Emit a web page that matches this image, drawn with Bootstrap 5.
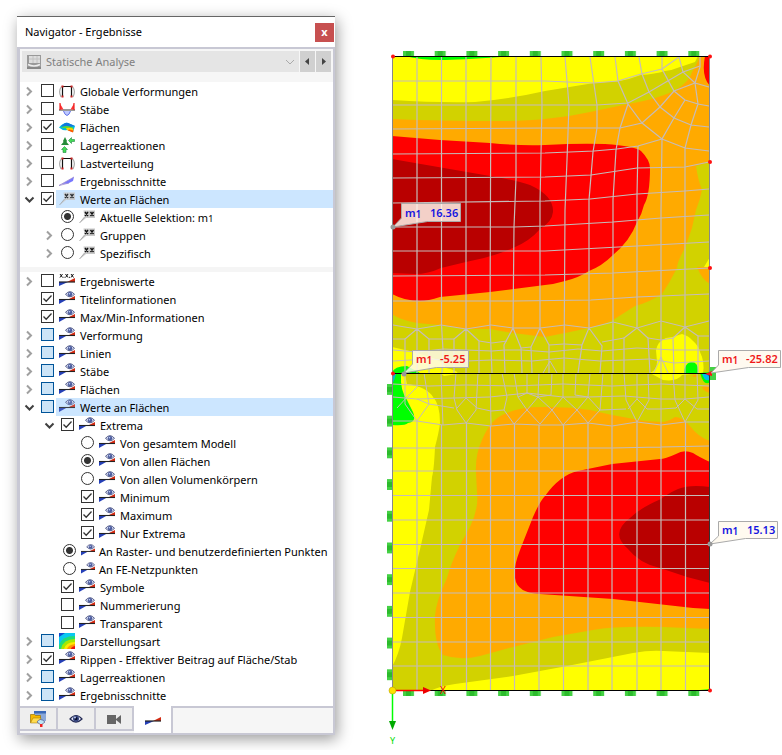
<!DOCTYPE html>
<html lang="de">
<head>
<meta charset="utf-8">
<meta name="viewport" content="width=device-width, initial-scale=1">
<title>Navigator - Ergebnisse</title>
<link href="https://cdn.jsdelivr.net/npm/bootstrap@5.3.0/dist/css/bootstrap.min.css" rel="stylesheet">
<style>
body{font-family:"Noto Sans","Open Sans",sans-serif;font-size:11px;line-height:18px;color:#000;background:#fff}
.workspace{padding:16px 0 0 17px}
.navigator{flex:0 0 318px;border-top:1px solid #666;background:#fff;box-shadow:2px 4px 14px rgba(0,0,0,.4)}
.titlebar{height:30px;padding:0 1px 0 8px;font-size:11px}
.close-btn{width:19px;height:19px;background:#c75050;color:#fff;border:0;border-radius:0;padding:0;font-size:11px;line-height:16px;font-weight:700}
.pane{border:2px solid #c8c8d4;border-left-width:3px}
.picker{background:#f6f6f6;height:33px;padding:2px 2px 0}
.picker .case-box{height:21px;background:#e5e5e5;margin-right:1px}
.case-box svg{width:14px;height:14px;margin:0 0 0 5px;flex:none}
.case-box select{height:21px;padding:0 18px 0 5px;border:0;border-radius:0;background-color:transparent;color:#808080;font-size:11px;line-height:20px;background-size:12px 12px;background-position:right 3px center;background-image:url("data:image/svg+xml,%3Csvg xmlns='http://www.w3.org/2000/svg' viewBox='0 0 12 12'%3E%3Cpath d='M2 4l4 4 4-4' fill='none' stroke='%23aaa'/%3E%3C/svg%3E")}
.step-btn{width:15px;height:21px;border:0;padding:0;background:#d0d0d0;margin-left:1px;line-height:0}
.step-btn:first-of-type{margin-left:0}
.tree li{height:18px}
.tree .lv2{padding-left:20px}
.tree .lv3{padding-left:40px}
.tree .nudged{padding-left:22px}
.tree .nudged label{padding-left:3px}
.tree .nudged .glyph{width:14px;margin-right:4px}
.twist{width:21px;height:18px;border:0;background:none;padding:0 3px 0 0;line-height:0;flex:none}
.twist svg{width:11px;height:11px}
.tick{appearance:none;width:13px;height:13px;margin:2px 0 0;border:1px solid #333;background:#fff center/11px 11px no-repeat;flex:none}
.tick:checked{background-image:url("data:image/svg+xml,%3Csvg xmlns='http://www.w3.org/2000/svg' viewBox='0 0 11 11'%3E%3Cpath d='M1.5 5.5l2.7 2.8L9.5 2.5' fill='none' stroke='%23333' stroke-width='1.3'/%3E%3C/svg%3E")}
.tick.mixed{background-color:#cce4f7;border-color:#005499}
.tick[type=radio]{border-radius:50%}
.tick[type=radio]:checked{background-image:radial-gradient(circle,#333 0 3px,transparent 4px)}
.tree label{height:18px;margin-left:2px;padding-left:3px;padding-top:1px;white-space:nowrap}
.tree .chosen label{background:#cce6ff}
.glyph{width:16px;height:16px;margin:0 5px 0 0;flex:none}
.chosen .glyph{opacity:.85}
.sub1{font-size:9px}
.split{height:5px;background:#f5f5f5;margin-top:5px}
.dock{height:27px;margin-top:2px;background:#f6f6f6;border-top:2px solid #c8c8d4}
.dock .dock-tab{width:38px;height:23px;border:0;border-right:2px solid #c8c8d4;border-bottom:2px solid #c8c8d4;background:#eee;padding:0;line-height:0}
.dock .dock-tab.current{width:39px;height:27px;background:#fff;margin-top:-2px;border-bottom:0}
.dock svg{width:16px;height:16px}
.model{margin:24px 0 0 45px;min-width:0}
.model svg{display:block;width:100%}
.callouts text{font-size:11px;font-weight:600}
.callouts .idx{font-size:10px}
</style>
<script src="https://cdn.jsdelivr.net/npm/bootstrap@5.3.0/dist/js/bootstrap.bundle.min.js"></script>
</head>
<body>
<svg width="0" height="0" class="position-absolute" aria-hidden="true">
<defs>
<symbol id="i-closed" viewBox="0 0 11 11"><path d="M3 1.500l4 4-4 4" fill="none" stroke="#a0a0a0" stroke-width="2"/></symbol>
<symbol id="i-open" viewBox="0 0 11 11"><path d="M1.500 3.500l4 4 4-4" fill="none" stroke="#404040" stroke-width="2"/></symbol>
<symbol id="i-frame" viewBox="0 0 16 16"><path d="M2.500 3.500Q-1 8 2 14M13.500 3.500q3.500 4.500.5 10.500" fill="none" stroke="#aaa" stroke-width="1.200"/><path d="M3.500 13.500v-10h9v10" fill="none" stroke="#111" stroke-width="1.200"/><path d="M2.500 2.500h2v2h-2zM11.500 2.500h2v2h-2zM2.500 12.500h2v2h-2zM11.500 12.500h2v2h-2z" fill="#c22"/></symbol>
<symbol id="i-beam" viewBox="0 0 16 16"><path d="M4 9Q8 20 12 9z" fill="#bcc8ff" stroke="#6574e8"/><path d="M0 8h16v2H0z" fill="#999"/><path d="M1 2.500L4.500 8.500H1zM15 2.500l-3.500 6H15z" fill="#f33"/><path d="M1 2v7M15 2v7" stroke="#e22" stroke-width="1.200"/></symbol>
<symbol id="i-surf" viewBox="0 0 16 16"><path d="M0 8.500Q5 3 9 4l7 3-2 6-6-2q-4 1-8-2.500z" fill="#0bd"/><path d="M2 7.500Q6 3 9 4l7 3-5 1z" fill="#17d"/><path d="M2 8.500q5-3 12 0v2l-6-1z" fill="#5d3"/><path d="M7 9q4-1 7.500 1l-.5 3-6-2z" fill="#fc0"/><path d="M10 10.500l4.500 1-.5 2-5-2z" fill="#f50"/></symbol>
<symbol id="i-reaction" viewBox="0 0 16 16"><path d="M6 0l2 4-.500 1L10 8H2l2.500-3L4 4z" fill="#258a38"/><path d="M5.500 9.500l3 3H7v3H4v-3H2.500z" fill="#4d5" stroke="#284" stroke-width=".6"/><path d="M9.500 3.500l3-3V2.500H15.500v2h-3v2z" fill="#4d5" stroke="#284" stroke-width=".6"/></symbol>
<symbol id="i-section" viewBox="0 0 16 16"><path d="M3 11L15 4l-1 4-5 2.500z" fill="#77f"/><path d="M0 12.500L15 4M0 12.500l10-2.500" stroke="#98c" stroke-width=".8"/></symbol>
<symbol id="i-xx" viewBox="0 0 16 16"><path d="M4.500 1.500H16V9H7l-6 5 4.500-6z" fill="#c8c8c8"/><path d="M.500 14l5-6" stroke="#999" stroke-width=".8"/><path d="M6 3l3 4m0-4L6 7m5.500-4l3 4m0-4l-3 4" stroke="#111" stroke-width="1.300"/></symbol>
<symbol id="i-ramp" viewBox="0 0 16 16"><path d="M0 9h9l-9 4z" fill="#2540b8"/><path d="M8 9l8-4v4z" fill="#d22a12"/><path d="M0 9h16" stroke="#222" stroke-width="1.200"/></symbol>
<symbol id="i-eye" viewBox="0 0 16 16"><path d="M0 8.500h8l-8 4.500z" fill="#2540b8"/><path d="M9 8.500l7-3.500v4z" fill="#d22a12"/><path d="M0 8.500h16" stroke="#222" stroke-width="1.100"/><path d="M6.500 3.300Q11-2 15.500 3.300 11 8.300 6.500 3.300z" fill="#d9def2" stroke="#303a70" stroke-width=".8"/><circle cx="11" cy="3.300" r="2.200" fill="#4a5a9c"/><circle cx="10.500" cy="2.700" r=".8" fill="#c5d4fa"/></symbol>
<symbol id="i-values" viewBox="0 0 16 16"><use href="#i-ramp" width="16" height="16"/><path d="M1 1l2.500 3.500m0-3.500L1 4.500M6.500 1L9 4.500M9 1L6.500 4.500M12 1l2.500 3.500m0-3.500L12 4.500M4.500 4.300h1M10 4.300h1" stroke="#111" stroke-width="1"/></symbol>
<symbol id="i-contour" viewBox="0 0 16 16"><path d="M0 0h16v16H0z" fill="#09c8f0"/><path d="M0 0h6L0 4z" fill="#114bd0"/><path d="M0 12Q3 3 16 3v13H0z" fill="#22dd77"/><path d="M2 16Q4 6 16 6v10z" fill="#a5e800"/><path d="M5 16Q7 9 16 9v7z" fill="#ffe800"/><path d="M8 16q1-4 8-5v5z" fill="#ff9a00"/><path d="M12 16q0-2 4-3v3z" fill="#e11"/></symbol>
<symbol id="i-project" viewBox="0 0 16 16"><path d="M4 0h12v10H4z" fill="#8ba8d8"/><path d="M4 0h12v2.500H4z" fill="#3868b8"/><path d="M.500 3.500h4l1 1h5v7H.500z" fill="#f5b800" stroke="#9b7200" stroke-width=".7"/><path d="M3 7h8l-2 5H.500z" fill="#ffdc50" stroke="#9b7200" stroke-width=".5"/><path d="M7 11q3-5 8 0l-4 3z" fill="#bde6f5" stroke="#558" stroke-width=".7"/><path d="M10 13h2.500v3H10z" fill="#e22"/></symbol>
<symbol id="i-look" viewBox="0 0 16 16"><path d="M2 8Q8 1 14 8 8 14 2 8z" fill="#e6eafa" stroke="#252c55" stroke-width="1.200"/><circle cx="8" cy="7.700" r="3" fill="#34437e"/><circle cx="8" cy="7.700" r="1.400" fill="#080c28"/><circle cx="7" cy="6.500" r=".9" fill="#c9d8ff"/></symbol>
<symbol id="i-camera" viewBox="0 0 16 16"><path d="M1 4h9v9H1zM10 8l5-4v9l-5-4z" fill="#666"/></symbol>
</defs>
</svg>

<main class="workspace d-flex align-items-start">
<section class="navigator" aria-label="Navigator">
<header class="titlebar d-flex align-items-center justify-content-between"><span>Navigator - Ergebnisse</span><button class="close-btn" aria-label="Schließen">x</button></header>
<div class="pane">
<div class="picker d-flex">
<div class="case-box d-flex flex-grow-1 align-items-center"><svg viewBox="0 0 14 14"><path d="M0 0h14v14H0z" fill="#999"/><path d="M2 1h11v7H2z" fill="#ddd"/><path d="M2 4h11M6 1v7M10 1v7" stroke="#c2c2c2"/><path d="M1 9.500q6 3 12 0" fill="none" stroke="#eee" stroke-width="1.500"/><path d="M0 13h14" stroke="#777"/></svg><select class="form-select" aria-label="Analyse"><option>Statische Analyse</option></select></div>
<button class="step-btn" aria-label="Zurück"><svg width="7" height="9"><path d="M5 1v7L1 4.500z" fill="#444"/></svg></button><button class="step-btn" aria-label="Weiter"><svg width="7" height="9"><path d="M2 1v7l4-3.500z" fill="#444"/></svg></button>
</div>

<ul class="tree list-unstyled mb-0">
<li class="d-flex"><button class="twist" aria-label="Aufklappen"><svg><use href="#i-closed"/></svg></button><input class="tick" type="checkbox" id="a1"><label class="d-flex flex-grow-1" for="a1"><svg class="glyph"><use href="#i-frame"/></svg>Globale Verformungen</label></li>
<li class="d-flex"><button class="twist" aria-label="Aufklappen"><svg><use href="#i-closed"/></svg></button><input class="tick" type="checkbox" id="a2"><label class="d-flex flex-grow-1" for="a2"><svg class="glyph"><use href="#i-beam"/></svg>Stäbe</label></li>
<li class="d-flex"><button class="twist" aria-label="Aufklappen"><svg><use href="#i-closed"/></svg></button><input class="tick" type="checkbox" id="a3" checked><label class="d-flex flex-grow-1" for="a3"><svg class="glyph"><use href="#i-surf"/></svg>Flächen</label></li>
<li class="d-flex"><button class="twist" aria-label="Aufklappen"><svg><use href="#i-closed"/></svg></button><input class="tick" type="checkbox" id="a4"><label class="d-flex flex-grow-1" for="a4"><svg class="glyph"><use href="#i-reaction"/></svg>Lagerreaktionen</label></li>
<li class="d-flex"><button class="twist" aria-label="Aufklappen"><svg><use href="#i-closed"/></svg></button><input class="tick" type="checkbox" id="a5"><label class="d-flex flex-grow-1" for="a5"><svg class="glyph"><use href="#i-frame"/></svg>Lastverteilung</label></li>
<li class="d-flex"><button class="twist" aria-label="Aufklappen"><svg><use href="#i-closed"/></svg></button><input class="tick" type="checkbox" id="a6"><label class="d-flex flex-grow-1" for="a6"><svg class="glyph"><use href="#i-section"/></svg>Ergebnisschnitte</label></li>
<li class="d-flex chosen"><button class="twist" aria-label="Zuklappen"><svg><use href="#i-open"/></svg></button><input class="tick" type="checkbox" id="a7" checked><label class="d-flex flex-grow-1" for="a7"><svg class="glyph"><use href="#i-xx"/></svg>Werte an Flächen</label></li>
<li class="d-flex lv2"><span class="twist"></span><input class="tick" type="radio" name="sel" id="a8" checked><label class="d-flex flex-grow-1" for="a8"><svg class="glyph"><use href="#i-xx"/></svg><span>Aktuelle Selektion: m<span class="sub1">1</span></span></label></li>
<li class="d-flex lv2"><button class="twist" aria-label="Aufklappen"><svg><use href="#i-closed"/></svg></button><input class="tick" type="radio" name="sel" id="a9"><label class="d-flex flex-grow-1" for="a9"><svg class="glyph"><use href="#i-xx"/></svg>Gruppen</label></li>
<li class="d-flex lv2"><button class="twist" aria-label="Aufklappen"><svg><use href="#i-closed"/></svg></button><input class="tick" type="radio" name="sel" id="a10"><label class="d-flex flex-grow-1" for="a10"><svg class="glyph"><use href="#i-xx"/></svg>Spezifisch</label></li>
</ul>
<div class="split"></div>
<ul class="tree list-unstyled mb-0">
<li class="d-flex"><button class="twist" aria-label="Aufklappen"><svg><use href="#i-closed"/></svg></button><input class="tick" type="checkbox" id="b1"><label class="d-flex flex-grow-1" for="b1"><svg class="glyph"><use href="#i-values"/></svg>Ergebniswerte</label></li>
<li class="d-flex"><span class="twist"></span><input class="tick" type="checkbox" id="b2" checked><label class="d-flex flex-grow-1" for="b2"><svg class="glyph"><use href="#i-eye"/></svg>Titelinformationen</label></li>
<li class="d-flex"><span class="twist"></span><input class="tick" type="checkbox" id="b3" checked><label class="d-flex flex-grow-1" for="b3"><svg class="glyph"><use href="#i-eye"/></svg>Max/Min-Informationen</label></li>
<li class="d-flex"><button class="twist" aria-label="Aufklappen"><svg><use href="#i-closed"/></svg></button><input class="tick mixed" type="checkbox" id="b4"><label class="d-flex flex-grow-1" for="b4"><svg class="glyph"><use href="#i-eye"/></svg>Verformung</label></li>
<li class="d-flex"><button class="twist" aria-label="Aufklappen"><svg><use href="#i-closed"/></svg></button><input class="tick mixed" type="checkbox" id="b5"><label class="d-flex flex-grow-1" for="b5"><svg class="glyph"><use href="#i-eye"/></svg>Linien</label></li>
<li class="d-flex"><button class="twist" aria-label="Aufklappen"><svg><use href="#i-closed"/></svg></button><input class="tick mixed" type="checkbox" id="b6"><label class="d-flex flex-grow-1" for="b6"><svg class="glyph"><use href="#i-eye"/></svg>Stäbe</label></li>
<li class="d-flex"><button class="twist" aria-label="Aufklappen"><svg><use href="#i-closed"/></svg></button><input class="tick mixed" type="checkbox" id="b7"><label class="d-flex flex-grow-1" for="b7"><svg class="glyph"><use href="#i-eye"/></svg>Flächen</label></li>
<li class="d-flex chosen"><button class="twist" aria-label="Zuklappen"><svg><use href="#i-open"/></svg></button><input class="tick mixed" type="checkbox" id="b8"><label class="d-flex flex-grow-1" for="b8"><svg class="glyph"><use href="#i-eye"/></svg>Werte an Flächen</label></li>
<li class="d-flex lv2"><button class="twist" aria-label="Zuklappen"><svg><use href="#i-open"/></svg></button><input class="tick" type="checkbox" id="b9" checked><label class="d-flex flex-grow-1" for="b9"><svg class="glyph"><use href="#i-eye"/></svg>Extrema</label></li>
<li class="d-flex lv3"><span class="twist"></span><input class="tick" type="radio" name="ext" id="b10"><label class="d-flex flex-grow-1" for="b10"><svg class="glyph"><use href="#i-eye"/></svg>Von gesamtem Modell</label></li>
<li class="d-flex lv3"><span class="twist"></span><input class="tick" type="radio" name="ext" id="b11" checked><label class="d-flex flex-grow-1" for="b11"><svg class="glyph"><use href="#i-eye"/></svg>Von allen Flächen</label></li>
<li class="d-flex lv3"><span class="twist"></span><input class="tick" type="radio" name="ext" id="b12"><label class="d-flex flex-grow-1" for="b12"><svg class="glyph"><use href="#i-eye"/></svg>Von allen Volumenkörpern</label></li>
<li class="d-flex lv3"><span class="twist"></span><input class="tick" type="checkbox" id="b13" checked><label class="d-flex flex-grow-1" for="b13"><svg class="glyph"><use href="#i-eye"/></svg>Minimum</label></li>
<li class="d-flex lv3"><span class="twist"></span><input class="tick" type="checkbox" id="b14" checked><label class="d-flex flex-grow-1" for="b14"><svg class="glyph"><use href="#i-eye"/></svg>Maximum</label></li>
<li class="d-flex lv3"><span class="twist"></span><input class="tick" type="checkbox" id="b15" checked><label class="d-flex flex-grow-1" for="b15"><svg class="glyph"><use href="#i-eye"/></svg>Nur Extrema</label></li>
<li class="d-flex nudged"><span class="twist"></span><input class="tick" type="radio" name="pts" id="b16" checked><label class="d-flex flex-grow-1" for="b16"><svg class="glyph"><use href="#i-eye"/></svg>An Raster- und benutzerdefinierten Punkten</label></li>
<li class="d-flex nudged"><span class="twist"></span><input class="tick" type="radio" name="pts" id="b17"><label class="d-flex flex-grow-1" for="b17"><svg class="glyph"><use href="#i-eye"/></svg>An FE-Netzpunkten</label></li>
<li class="d-flex lv2"><span class="twist"></span><input class="tick" type="checkbox" id="b18" checked><label class="d-flex flex-grow-1" for="b18"><svg class="glyph"><use href="#i-eye"/></svg>Symbole</label></li>
<li class="d-flex lv2"><span class="twist"></span><input class="tick" type="checkbox" id="b19"><label class="d-flex flex-grow-1" for="b19"><svg class="glyph"><use href="#i-eye"/></svg>Nummerierung</label></li>
<li class="d-flex lv2"><span class="twist"></span><input class="tick" type="checkbox" id="b20"><label class="d-flex flex-grow-1" for="b20"><svg class="glyph"><use href="#i-eye"/></svg>Transparent</label></li>
<li class="d-flex"><button class="twist" aria-label="Aufklappen"><svg><use href="#i-closed"/></svg></button><input class="tick mixed" type="checkbox" id="b21"><label class="d-flex flex-grow-1" for="b21"><svg class="glyph"><use href="#i-contour"/></svg>Darstellungsart</label></li>
<li class="d-flex"><button class="twist" aria-label="Aufklappen"><svg><use href="#i-closed"/></svg></button><input class="tick" type="checkbox" id="b22" checked><label class="d-flex flex-grow-1" for="b22"><svg class="glyph"><use href="#i-eye"/></svg>Rippen - Effektiver Beitrag auf Fläche/Stab</label></li>
<li class="d-flex"><button class="twist" aria-label="Aufklappen"><svg><use href="#i-closed"/></svg></button><input class="tick mixed" type="checkbox" id="b23"><label class="d-flex flex-grow-1" for="b23"><svg class="glyph"><use href="#i-eye"/></svg>Lagerreaktionen</label></li>
<li class="d-flex"><button class="twist" aria-label="Aufklappen"><svg><use href="#i-closed"/></svg></button><input class="tick mixed" type="checkbox" id="b24"><label class="d-flex flex-grow-1" for="b24"><svg class="glyph"><use href="#i-eye"/></svg>Ergebnisschnitte</label></li>
</ul>
<nav class="dock d-flex" aria-label="Navigatoren">
<button class="dock-tab" aria-label="Daten"><svg><use href="#i-project"/></svg></button><button class="dock-tab" aria-label="Zeigen"><svg><use href="#i-look"/></svg></button><button class="dock-tab" aria-label="Ansichten"><svg><use href="#i-camera"/></svg></button><button class="dock-tab current" aria-label="Ergebnisse"><svg><use href="#i-ramp"/></svg></button>
</nav>
</div>
</section>

<section class="model flex-grow-1" aria-label="Modell">
<svg viewBox="380 40 402 710">
<defs>
<pattern id="sup-h" x="403" width="31.700" height="720" patternUnits="userSpaceOnUse"><path d="M0 0h11v720H0z" fill="#44d144"/><path d="M3 0h5v720H3z" fill="#2cbb2c"/></pattern>
<pattern id="sup-v" y="384" width="720" height="31.700" patternUnits="userSpaceOnUse"><path d="M0 0h720v11H0z" fill="#44d144"/><path d="M0 3h720v5H0z" fill="#2cbb2c"/></pattern>
<clipPath id="plate"><path d="M392.500 56.500h317v634h-317z"/></clipPath>
</defs>
<path d="M403 51h300v5H403zM403 691h300v5H403z" fill="url(#sup-h)"/>
<path d="M387 384h5v298h-5z" fill="url(#sup-v)"/>
<path d="M709 367h7v13h-7z" fill="#44d144"/>
<g clip-path="url(#plate)">
<path d="M392 56h318v635H392z" fill="#d2d200"/>
<path fill="#ff0" d="M392 56V100Q440 103 475 102 510 99 545 91L594 83 620 81Q630 79 641 75 655 74 665 71 673 70 680 67L695 62 698 56z"/>
<path fill="#fa0" d="M392 119Q440 121 500 121 525 121 545 119 568 117 590 112L628 104Q645 101 655 98 672 93 680 87 690 80 692 72 696 66 700 56H710V162L696 166Q698 180 702 190 700 200 696 210L692 228 685 248Q677 262 677 268 670 282 662 294 650 302 635 306L613 320Q600 326 589 328L565 333 545 337 513 333Q500 331 490 329L463 329 440 325 417 323Q400 320 392 314zM697 267H710V284Q702 280 697 267z"/>
<path fill="red" d="M392 136L440 140 490 143Q520 146 545 145 580 143 605 144 635 146 641 151 650 160 650 168 650 195 644 205 642 214 637 222 630 241 613 255 602 266 589 271 578 278 565 281 555 284 545 285L490 292 440 297Q428 301 420 301 405 301 392 294zM705 56Q701 77 710 86V56z"/>
<path fill="#b90000" d="M392 159L490 176Q515 180 530 185 554 196 553 212 552 222 540 229 530 241 513 248 493 257 466 262L441 268Q428 274 415 274L392 273z"/>
<path fill="#0f0" d="M405 56Q420 60 440 60 460 60 500 57V56z"/>
<path fill="#ff0" d="M392 347Q412 351 430 357 443 361 446 368 460 371 457 374L444 376 440 373 405 374 407 384Q427 387 433 397 440 404 440 423 439 432 435 447 434 470 432 477L429 510 421 545 410 592 402 638Q399 654 392 667z"/>
<path fill="#0f0" d="M392 373Q394 366 407 366L420 373 401 374Q400 390 407 400L413 412Q417 422 408 423 405 426 392 425z"/>
<path fill="#0bc" d="M392 374h4q-2 8-4 10z"/>
<path fill="#fa0" d="M710 441Q698 437 690 426 682 417 675 417 668 422 661 422L645 421 612 415 590 410Q570 407 550 407 520 406 507 413 498 416 492 423 486 430 482 440 475 455 476 473L477 493Q479 508 470 527L460 545Q451 563 447 578 436 601 435 616 434 645 443 655 460 661 480 656L513 647 553 637 593 630Q615 626 663 627L710 629z"/>
<path fill="red" d="M710 462Q699 457 693 453 684 449 676 454 665 459 660 459L612 464 578 471Q560 475 545 496 540 501 533 517L520 550Q513 568 515 578 517 593 540 594L613 599 693 608 710 609z"/>
<path fill="#b90000" d="M710 487Q690 484 678 489 667 494 661 499 640 508 630 518 610 533 627 548 640 564 660 568L687 577 710 583z"/>
<path fill="#ff0" d="M430 691Q440 686 455 684L513 676 567 666 633 653Q650 650 663 651L710 653V691z"/>
<path fill="#ff0" d="M650 373Q657 370 657 362L656 350Q658 341 666 338 674 337 682 334 689 336 692 340 699 346 700 352 705 362 703 373L682 375Q677 382 663 380zM704 267h6v-10z"/>
<path fill="#0f0" d="M684 373Q684 365 690 362 699 361 698 373zM700 373Q704 387 710 382V372zM690 691l20-2v2z"/>
<path fill="#0be" d="M702 373Q704 382 710 380V373z"/><path fill="#15c" d="M705 373l5 4v-4z"/><path fill="#fa0" d="M702 387Q706 384 710 386V393Q703 391 702 387zM693 375h4v2h-4z"/>

<g fill="none" stroke="#c5bcb9" stroke-width="1">
<path stroke-width="1.200" d="M417 57V329L405 339V373M417 329L429 339V373M417 329V373M441.500 57V325L443 350 442 373M466 57V329L454 339V373M466 329L479 341 479 373M466 329V373M491 57L490 325 492 373M516 57V178L514 227 513 328 504 345 505 373M513 328L521 348 522 373M541 57L542 105 541 154 540 203V328L531 347 532 373M540 328L549 345V373M565 57L569 105 567 160 565 210 564 373M590 57L597 105V128L593 152 589 200 589 328 582 345 578 373M589 328L602 346 600 373M615 57L618 81 628 104 642 123 662 139 685 148 709 151M628 104L620 128 616 150 613 200V373M639 57L642 74 649 92 660 107 674 118 691 125 709 127M638 146L637 195V328L624 338V373M637 328L648 338 650 373M662 57V69L674 91 685 100 698 104 709 106M685 100L674 118 662 139 661 210V321L661 373M679 57L683 72 695 83 709 87M700 57V67L695 83 698 104 691 125 685 148V327L673 338 674 373M685 327L698 336V373M685 327V373"/>
<path stroke-width="1.200" d="M393 81H545L568 82 594 83 618 81 641 74 662 69 679 57M393 105H597L628 103 649 92 683 72 700 66M393 129L545 128H597L620 128 642 123 660 107 674 91 695 83M393 154L545 153 594 151 617 149 638 146 662 139M393 178L545 177 591 175 637 168 685 167 709 162M393 203L545 201 590 199 637 194 685 191 709 189M393 227L514 227 545 226 613 222 661 218 709 215M393 251H545L637 246 709 242M393 276L545 275 613 273 709 268M393 301H514L591 300 637 297 709 294"/>
<path d="M393 325L417 329 441 325 466 329 491 325 513 328 540 328 565 325 589 328 613 322 637 328 661 321 685 327 709 321M393 339H405M429 339H454M479 341L492 343 507 341M521 348L531 347M549 345L564 344 582 345M602 342L624 338M648 338L661 340 673 338M698 336H709M393 350L417 352 443 349 466 350 492 351 505 350 522 350 549 352 578 349 602 351 637 348 674 350 709 350M393 361L429 359 466 361 492 360 532 361 564 358 600 361 650 359 674 363 709 361"/>
<path d="M661 357L653 374M661 357L668 373M550 361L557 373M550 361L543 373"/>
<path d="M405 373V404L417 421 429 404 424 373M417 373V387L408 396 397 408M417 399L429 404M441 373L443 425M456 373L454 398 457 410 466 423 476 410 478 373M466 373V398L457 408M466 398L477 408M490 373L491 426M502 373L507 397 504 410 514 424 527 410 540 424 552 410 563 425 577 410 588 423 600 410 603 373M514 373L518 397 527 410 538 397 539 373M527 373V393L518 397M527 393L538 397 552 410 563 397 577 410 588 397 600 410M552 373L551 395 538 397M563 373V397M576 373L575 395 588 397 590 373M612 373V426M624 373L626 400 637 422 649 400 648 373M637 373V399L628 409M637 399L647 409M661 373V425M673 373L675 400 685 422 698 400 697 373M685 373V399L676 408M685 399L697 409"/>
<path d="M393 384L429 386 466 385 514 386 563 384 612 386 661 384 709 386M393 397L417 399 454 398 490 397 527 393 563 397 588 397 624 396 661 399 685 399 709 397M429 404L454 408M477 408L491 411 504 410M600 410L626 409M647 409L661 409 676 408M697 409H709M393 421H417L443 425 466 423 491 426 514 424 540 425 563 425 588 423 612 426 637 422 661 425 685 422H709"/>
<path stroke-width="1.200" d="M417 421V690M441.500 425V690M466.500 423V690M490.500 426V690M514.500 424V690M539 425V690M563.500 425V690M588 423V690M612 426V690M637 422V690M661 425V690M685.500 422V690M393 448L612 448 709 446M393 471H709M393 495.500H709M393 520H709M393 544.500H709M393 568.500H709M393 593H709M393 617.500H709M393 642H709M393 666H709"/>
</g>
</g>
<path d="M392.500 56V690M709.500 56V373" stroke="#888" fill="none"/>
<path d="M709.500 373V690" stroke="#333"/><path d="M392 56.500H710M392 373.500H710M392 690.500H710" stroke="#000"/>
<g fill="#f11"><circle cx="393" cy="56.500" r="2"/><circle cx="710" cy="56.500" r="2"/><circle cx="710" cy="162" r="2"/><circle cx="710" cy="268" r="2"/><circle cx="393" cy="373.500" r="2"/><circle cx="710" cy="690.500" r="2"/><path d="M705 374l7-3v5z"/></g>
<g class="callouts">
<g fill="#fffaf0" stroke="#aaa"><path fill-opacity=".83" d="M401.500 203.500h59v18h-33L393 227l8.500-9z"/><path fill-opacity=".83" d="M412.500 350.500h56v17h-32L404 373l8.500-9z"/><path d="M718.500 350.500h62v17h-32L711 373l7.500-8z"/><path d="M718.500 521.500h59v17h-32L710 544l8.500-8z"/></g>
<g fill="#999"><circle cx="393" cy="227" r="2.500"/><circle cx="404" cy="374" r="2.500"/><circle cx="710" cy="544" r="2.500"/></g>
<g fill="#1414e0"><text x="405" y="217">m<tspan class="idx" dy="1">1</tspan></text><text x="430" y="217">16.36</text><text x="722" y="534">m<tspan class="idx" dy="1">1</tspan></text><text x="747" y="534">15.13</text></g>
<g fill="#f01818"><text x="416" y="363">m<tspan class="idx" dy="1">1</tspan></text><text x="440" y="363">-5.25</text><text x="722" y="363">m<tspan class="idx" dy="1">1</tspan></text><text x="746" y="363">-25.82</text></g>
</g>
<path d="M393 690.500H424" stroke="#f00" stroke-width="1.500"/><path d="M423 687l8 3.500-8 3.500z" fill="#e00"/>
<path d="M392.500 691V722" stroke="#0f0" stroke-width="1.500"/><path d="M389 721h7l-3.500 9z" fill="#0a0"/><circle cx="392.500" cy="690.500" r="3.500" fill="#ffe000" stroke="#a90" stroke-width=".5"/>
<text x="440" y="694" font-size="10" fill="#e00">X</text><text x="390" y="744" font-size="9" fill="#0d0">Y</text>
</svg>
</section>
</main>
</body>
</html>
